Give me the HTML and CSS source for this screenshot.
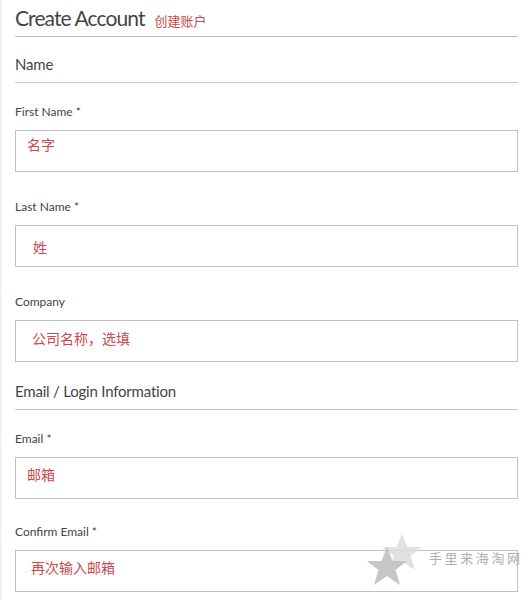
FILE: index.html
```html
<!DOCTYPE html>
<html lang="en">
<head>
<meta charset="utf-8">
<title>Create Account</title>
<link rel="stylesheet" href="styles.css">
</head>
<body>
<div class="page">
  <div class="title-row">
    <h1 class="title">Create Account</h1>
    <span class="note">创建账户</span>
  </div>

  <h2 class="section">Name</h2>

  <div class="field field--first">
    <label class="label">First Name *</label>
    <div class="input input--a"><span class="ph">名字</span></div>
  </div>
  <div class="field">
    <label class="label">Last Name *</label>
    <div class="input input--b"><span class="ph">姓</span></div>
  </div>
  <div class="field">
    <label class="label">Company</label>
    <div class="input input--c"><span class="ph">公司名称，选填</span></div>
  </div>

  <h2 class="section section--email">Email / Login Information</h2>

  <div class="field field--first">
    <label class="label">Email *</label>
    <div class="input input--d"><span class="ph">邮箱</span></div>
  </div>
  <div class="field field--tight">
    <label class="label">Confirm Email *</label>
    <div class="input input--e"><span class="ph">再次输入邮箱</span></div>
  </div>

  <div class="watermark">
    <svg class="stars" width="62" height="54" viewBox="0 0 62 54">
      <polygon class="star-light" points="38,0 43.5,13 58,13 46.5,22 51,36 38,27.5 25,36 29.5,22 18,13 32.5,13"/>
      <polygon class="star-dark" points="23,13 28.5,27 43,27 31.5,36 36,51 23,42 10,51 14.5,36 3,27 17.5,27"/>
    </svg>
    <span class="wm-text">手里来海淘网</span>
  </div>
</div>
</body>
</html>
```

FILE: styles.css
```css
html, body {
  margin: 0;
  padding: 0;
  background: #fff;
}

body {
  font-family: Lato, "Noto Sans", "Noto Sans CJK SC", sans-serif;
  color: #444;
}

.page {
  position: relative;
  width: 530px;
  height: 600px;
  box-sizing: border-box;
  border-left: 2px solid #f1f1f1;
  padding: 0 12px 0 13px;
  overflow: hidden;
}

.title-row {
  display: flex;
  align-items: baseline;
  gap: 10px;
  height: 37px;
  box-sizing: border-box;
  border-bottom: 1px solid #bdbdbd;
  padding-top: 3px;
}

.title {
  margin: 0;
  font-weight: 400;
  font-size: 21px;
  line-height: 30px;
  color: #454545;
  letter-spacing: -0.9px;
}

.note {
  font-family: "Noto Sans CJK SC", sans-serif;
  font-size: 13px;
  color: #c74a4e;
}

.section {
  margin: 17px 0 0;
  padding-bottom: 8px;
  border-bottom: 1px solid #c6c6c6;
  font-weight: 400;
  font-size: 15px;
  line-height: 20px;
  color: #444;
  letter-spacing: -0.2px;
}

.section--email {
  margin-top: 19px;
}

.field {
  display: flex;
  flex-direction: column;
  gap: 10px;
  margin-top: 27px;
}

.field--first {
  margin-top: 21px;
}

.field--tight {
  margin-top: 25px;
}

.label {
  font-size: 12px;
  line-height: 16px;
  color: #444;
}

.input {
  height: 42px;
  box-sizing: border-box;
  border: 1px solid #c2c2c2;
  padding: 8px 0 0 11px;
}

.ph {
  font-family: "Noto Sans CJK SC", sans-serif;
  font-size: 14px;
  line-height: 16px;
  color: #c74a4e;
  display: block;
}

.input--a { padding-top: 5px; padding-left: 11px; }
.input--b { padding-top: 13px; padding-left: 17px; }
.input--c { padding-top: 9px; padding-left: 16px; }
.input--d { padding-top: 8px; padding-left: 11px; }
.input--e { padding-top: 8px; padding-left: 15px; }

.watermark {
  position: absolute;
  left: 362px;
  top: 534px;
  display: flex;
  align-items: center;
  gap: 3px;
}

.stars {
  display: block;
}

.star-light {
  fill: #dcdcdc;
  opacity: 0.85;
}

.star-dark {
  fill: #c3c3c3;
  opacity: 0.95;
}

.wm-text {
  font-family: "Noto Sans CJK SC", sans-serif;
  font-size: 13px;
  letter-spacing: 2.6px;
  color: #b0b0b0;
  margin-top: -7px;
}
```
